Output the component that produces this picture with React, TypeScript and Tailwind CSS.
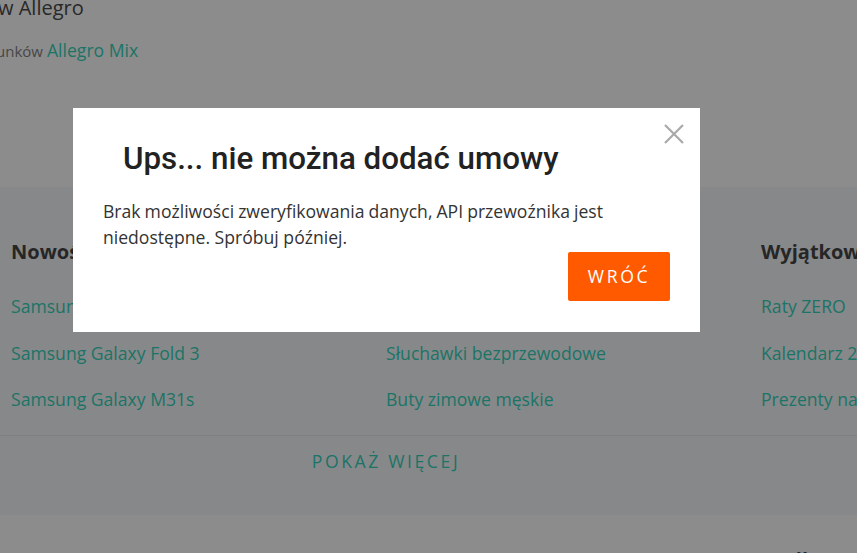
import React from "react";

const teal = "text-[#1b7466]";

function Column({ heading, links }: { heading: string; links: string[] }) {
  return (
    <div className="w-[375px] shrink-0">
      <h3 className="text-[20px] font-bold leading-[28px] text-[#262626] whitespace-nowrap">{heading}</h3>
      <ul className="mt-[27px] flex flex-col gap-[20.5px]">
        {links.map((l) => (
          <li key={l} className={`text-[17.6px] leading-[26px] whitespace-nowrap ${teal}`}>
            {l}
          </li>
        ))}
      </ul>
    </div>
  );
}

const line1 = ["Brak", "możliwości", "zweryfikowania", "danych,", "API", "przewoźnika", "jest"];

export default function App() {
  return (
    <div
      className="relative h-[553px] w-[857px] overflow-hidden bg-[#8c8c8c]"
      style={{ fontFamily: '"Open Sans", "Liberation Sans", sans-serif' }}
    >
      {/* top text */}
      <div className="flex h-[187px] flex-col">
        <div className="ml-[-2px] -mt-[2px] text-[20px] leading-[20px] text-[#282828]">w Allegro</div>
        <div className="mt-[19px] ml-[-4px] flex items-baseline gap-[4px] whitespace-nowrap">
          <span className="text-[15px] text-[#474747]">unków</span>
          <span className={`text-[17.6px] ${teal}`}>Allegro Mix</span>
        </div>
      </div>

      {/* gray links section */}
      <section className="h-[328px] bg-[#87888a]">
        <div className="flex pl-[11px] pt-[51px]">
          <Column heading="Nowości" links={["Samsung Galaxy S21", "Samsung Galaxy Fold 3", "Samsung Galaxy M31s"]} />
          <Column heading="Popularne" links={["Smartwatche", "Słuchawki bezprzewodowe", "Buty zimowe męskie"]} />
          <Column heading="Wyjątkowe okazje" links={["Raty ZERO", "Kalendarz 2022", "Prezenty na święta"]} />
        </div>
        <div className="mt-[23px] border-t border-[#7e7f81]" />
        <div className="w-[772px] pt-[12px] text-center">
          <span className={`text-[17.6px] uppercase tracking-[2.6px] ${teal}`}>Pokaż więcej</span>
        </div>
      </section>

      {/* bottom section peeking */}
      <div className="pl-[782px] pt-[31px] text-[20px] font-bold leading-[28px] text-[#262626] whitespace-nowrap">
        Allegro
      </div>

      {/* modal */}
      <div className="absolute left-[73px] top-[108px] h-[224px] w-[627px] bg-white">
        <button className="absolute right-[15px] top-[15px] h-[22px] w-[22px] text-[#a9a9a9]" aria-label="Zamknij">
          <svg viewBox="0 0 22 22" className="h-[22px] w-[22px]" fill="none" stroke="currentColor" strokeWidth="2.2">
            <path d="M2 2 L20 20 M20 2 L2 20" />
          </svg>
        </button>
        <h2
          className="pl-[50px] pt-[31px] text-[31.3px] font-medium leading-[40px] text-[#222222] whitespace-nowrap"
          style={{ fontFamily: 'Roboto, "Liberation Sans", sans-serif' }}
        >
          Ups... nie można dodać umowy
        </h2>
        <div className="mt-[19px] pl-[30px] text-[17.6px] leading-[26px] text-[#333333]">
          <p className="flex w-[500px] justify-between whitespace-nowrap">
            {line1.map((w) => (
              <span key={w}>{w}</span>
            ))}
          </p>
          <p>niedostępne. Spróbuj później.</p>
        </div>
        <div className="mt-[2px] flex justify-end pr-[30px]">
          <button className="h-[49px] w-[102px] rounded-[2px] bg-[#ff5a00] text-[17.6px] tracking-[2.6px] text-white">
            WRÓĆ
          </button>
        </div>
      </div>
    </div>
  );
}
